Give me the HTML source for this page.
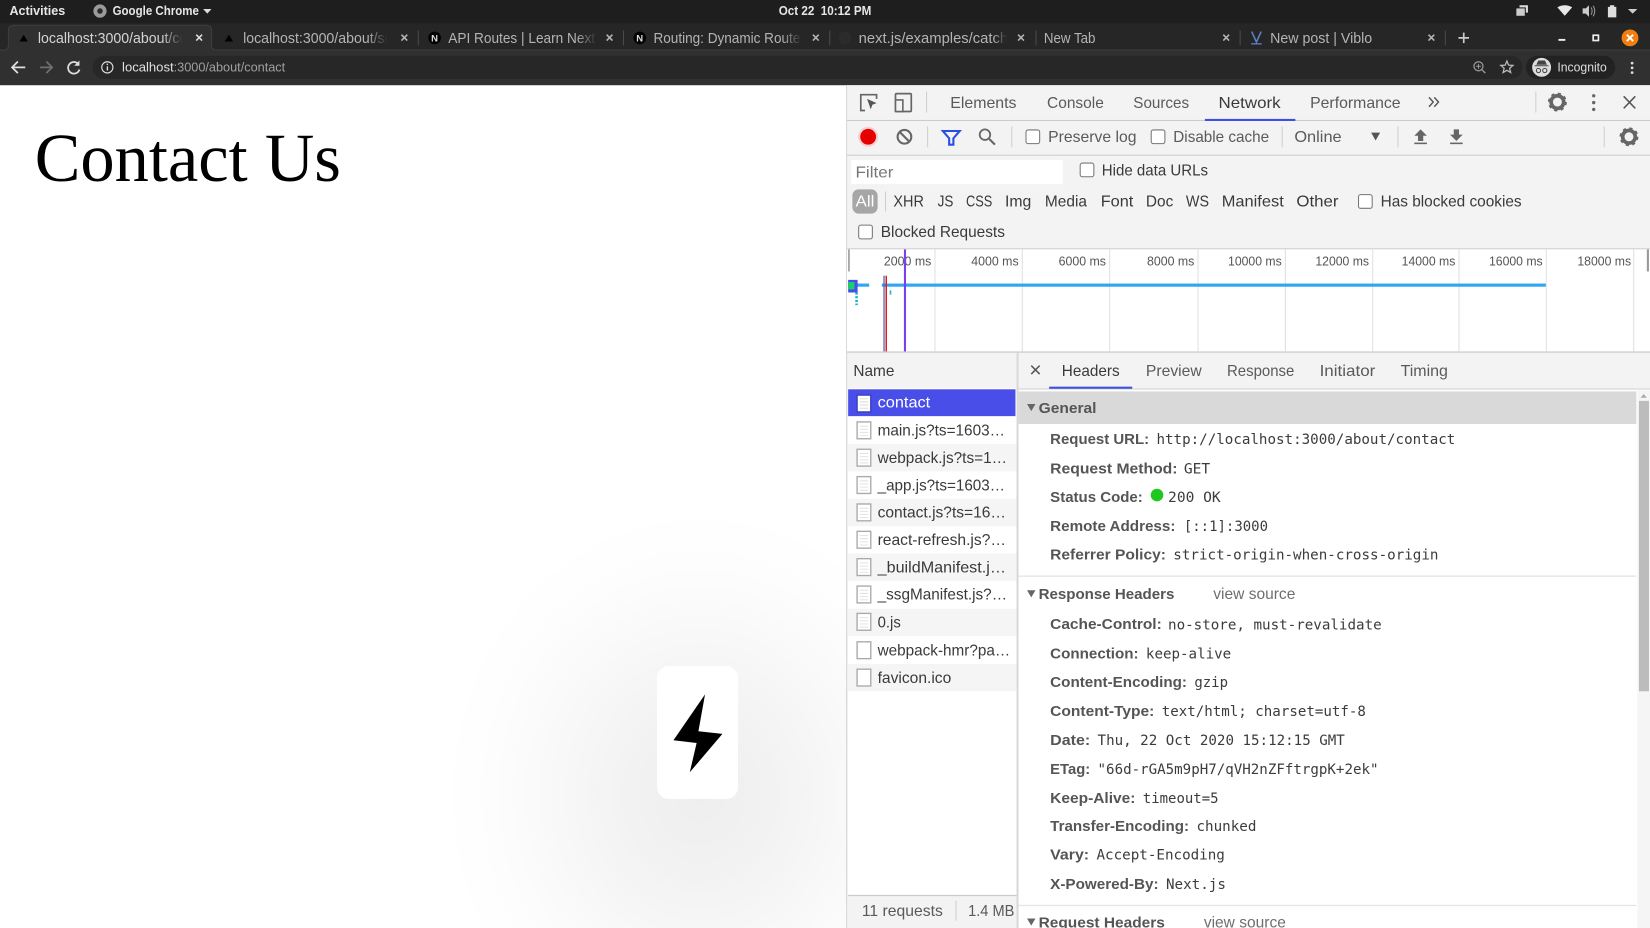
<!DOCTYPE html>
<html><head><meta charset="utf-8"><title>Contact Us</title>
<style>
html,body{margin:0;padding:0;background:#fff;width:1650px;height:928px;overflow:hidden}
#w{position:relative;width:1650px;height:928px;overflow:hidden}
svg{display:block;position:absolute;left:0;top:0;filter:blur(.3px)}
text{font-family:"Liberation Sans",sans-serif;font-size:14.6px;fill:#5a5a5a;white-space:pre}
.m{font-family:"DejaVu Sans Mono","Liberation Mono",monospace;font-size:13.4px;fill:#3c3c3c}
.b{font-weight:bold;font-size:14.4px;fill:#555}
.k{fill:#3a3a3a}
.t{fill:#b4b4b4;font-size:14.2px}
.o{fill:#e6e6e6;font-weight:bold;font-size:12.5px}
.tm{fill:#555;font-size:12.2px}
.ic{fill:none;stroke:#666;stroke-width:1.6}
.cb{fill:#fff;stroke:#767676;stroke-width:1}
.sep{fill:#cfcfcf}
.x{stroke:#b5b5b5;stroke-width:1.5;fill:none}
</style></head><body>
<div id="w">
<div style="position:absolute;left:440px;top:510px;width:520px;height:418px;background:radial-gradient(ellipse 260px 290px at 260px 285px,rgba(0,0,0,.065) 0%,rgba(0,0,0,.05) 28%,rgba(0,0,0,.026) 55%,rgba(0,0,0,.008) 80%,rgba(0,0,0,0) 100%)"></div>
<div style="position:absolute;left:657px;top:666px;width:81px;height:133px;border-radius:12px;background:#fff"></div>
<svg width="1650" height="928" viewBox="0 0 1568 882" preserveAspectRatio="none" xmlns="http://www.w3.org/2000/svg">
<defs>
<linearGradient id="fa" x1="0" x2="1" y1="0" y2="0"><stop offset="0" stop-color="#303030" stop-opacity="0"/><stop offset=".8" stop-color="#303030"/></linearGradient>
<linearGradient id="fb" x1="0" x2="1" y1="0" y2="0"><stop offset="0" stop-color="#262626" stop-opacity="0"/><stop offset=".8" stop-color="#262626"/></linearGradient>
</defs>
<!-- chrome -->
<rect x="0" y="0" width="1568" height="23" fill="#1e1e1e"/>
<rect x="0" y="22" width="1568" height="27" fill="#262626"/>
<rect x="0" y="49" width="1568" height="32" fill="#303030"/>
<path d="M0 47.5H4Q8 47.5 8 43V29Q8 24 13 24H196Q201 24 201 29V43Q201 47.5 206 47.5H1568V50H0Z" fill="#303030"/>
<path d="M0 47.5H4Q8 47.5 8 43V29Q8 24 13 24H196Q201 24 201 29V43Q201 47.5 206 47.5H1568" fill="none" stroke="#3e3e3e" stroke-width="1"/>
<text class="o" x="9" y="14.5" textLength="53" lengthAdjust="spacingAndGlyphs">Activities</text>
<circle cx="95" cy="10.5" r="6.3" fill="#9a9a9a"/><circle cx="95" cy="10.5" r="2.6" fill="#2a2a2a"/>
<text class="o" x="107" y="14.5" textLength="82" lengthAdjust="spacingAndGlyphs">Google Chrome</text>
<path d="M193 8.5h8l-4 4.5z" fill="#ddd"/>
<text class="o" x="740" y="14.5" textLength="88" lengthAdjust="spacingAndGlyphs">Oct 22  10:12 PM</text>
<path d="M1441 8h8v7h-8z" fill="#ccc"/><path d="M1444 5h8v7h-2V7h-6z" fill="#ddd"/>
<path d="M1480 7q7-4 14 0l-7 8z" fill="#e8e8e8"/>
<path d="M1504 8h3l3-3v11l-3-3h-3z" fill="#ccc"/><path d="M1512 7q2 3.500 0 7M1514 5.500q3 5 0 10" stroke="#999" stroke-width="1" fill="none"/>
<path d="M1528 6.500h2v-1.500h4v1.500h2v10h-8z" fill="#ddd"/>
<path d="M1547 8.500h9l-4.500 4.500z" fill="#ccc"/>
<!-- tabs -->
<path d="M18.500 39.500l4-6.500 4 6.500z" fill="#000"/>
<text class="t" x="36" y="41" style="fill:#d5d5d5" textLength="142" lengthAdjust="spacingAndGlyphs">localhost:3000/about/co</text>
<rect x="154" y="28" width="24" height="16" fill="url(#fa)"/>
<path class="x" d="M186.500 33l5.500 5.500M192 33l-5.500 5.500" style="stroke:#ddd"/>
<path d="M213.500 39.500l4-6.500 4 6.500z" fill="#000"/>
<text class="t" x="231" y="41" textLength="142" lengthAdjust="spacingAndGlyphs">localhost:3000/about/so</text>
<rect x="349" y="28" width="24" height="16" fill="url(#fb)"/>
<path class="x" d="M381.500 33l5.500 5.500M387 33l-5.500 5.500"/>
<rect x="397" y="29" width="1" height="14" fill="#4a4a4a"/>
<circle cx="413" cy="36" r="6" fill="#000"/><text x="409.700" y="39.500" style="font-size:9px;fill:#ddd;font-weight:bold">N</text>
<text class="t" x="426" y="41" textLength="146" lengthAdjust="spacingAndGlyphs">API Routes | Learn Next.j</text>
<rect x="548" y="28" width="24" height="16" fill="url(#fb)"/>
<path class="x" d="M576.500 33l5.500 5.500M582 33l-5.500 5.500"/>
<rect x="592" y="29" width="1" height="14" fill="#4a4a4a"/>
<circle cx="608" cy="36" r="6" fill="#000"/><text x="604.700" y="39.500" style="font-size:9px;fill:#ddd;font-weight:bold">N</text>
<text class="t" x="621" y="41" textLength="146" lengthAdjust="spacingAndGlyphs">Routing: Dynamic Routes</text>
<rect x="743" y="28" width="24" height="16" fill="url(#fb)"/>
<path class="x" d="M772.500 33l5.500 5.500M778 33l-5.500 5.500"/>
<rect x="788" y="29" width="1" height="14" fill="#4a4a4a"/>
<circle cx="803" cy="36" r="6" fill="#2b2b2b"/>
<text class="t" x="816" y="41" textLength="142" lengthAdjust="spacingAndGlyphs">next.js/examples/catch</text>
<rect x="944" y="28" width="16" height="16" fill="url(#fb)"/>
<path class="x" d="M967.500 33l5.500 5.500M973 33l-5.500 5.500"/>
<rect x="984" y="29" width="1" height="14" fill="#4a4a4a"/>
<text class="t" x="992" y="41" textLength="49" lengthAdjust="spacingAndGlyphs">New Tab</text>
<path class="x" d="M1162.500 33l5.500 5.500M1168 33l-5.500 5.500"/>
<rect x="1178" y="29" width="1" height="14" fill="#4a4a4a"/>
<path d="M1189.500 30l4.500 10 4.500-10" fill="none" stroke="#5c7fc4" stroke-width="1.500"/><rect x="1189" y="41" width="10" height="1.300" fill="#5c7fc4"/>
<text class="t" x="1207" y="41" textLength="97" lengthAdjust="spacingAndGlyphs">New post | Viblo</text>
<path class="x" d="M1357.500 33l5.500 5.500M1363 33l-5.500 5.500"/>
<rect x="1373" y="29" width="1" height="14" fill="#4a4a4a"/>
<path d="M1391 31v10M1386 36h10" stroke="#ccc" stroke-width="1.600"/>
<rect x="1481" y="37" width="6.500" height="1.800" fill="#eee"/>
<rect x="1514" y="33.500" width="5" height="5" fill="none" stroke="#eee" stroke-width="1.600"/>
<circle cx="1549" cy="36" r="8" fill="#f07e10"/><path d="M1546 33l6 6M1552 33l-6 6" stroke="#fff" stroke-width="1.800"/>
<!-- toolbar -->
<path d="M24 64H12M17 58.500L11.500 64L17 69.500" fill="none" stroke="#ddd" stroke-width="1.700"/>
<path d="M50 64H38M44 58.500L49.500 64L44 69.500" fill="none" stroke="#6f6f6f" stroke-width="1.700"/>
<path d="M74.500 61A5.500 5.500 0 1 0 75.500 66" fill="none" stroke="#ddd" stroke-width="1.700"/><path d="M75.500 57.500v5h-5z" fill="#ddd"/>
<rect x="88" y="53" width="1359" height="22" rx="11" fill="#272727"/>
<circle cx="102" cy="64" r="5.300" fill="none" stroke="#ddd" stroke-width="1.100"/><rect x="101.400" y="63" width="1.300" height="4" fill="#ddd"/><rect x="101.400" y="60.500" width="1.300" height="1.300" fill="#ddd"/>
<text x="116" y="68" style="font-size:12.5px;fill:#e0e0e0" textLength="49" lengthAdjust="spacingAndGlyphs">localhost</text>
<text x="165" y="68" style="font-size:12.5px;fill:#a0a0a0" textLength="106" lengthAdjust="spacingAndGlyphs">:3000/about/contact</text>
<circle cx="1405" cy="63" r="4.300" fill="none" stroke="#999" stroke-width="1.200"/><path d="M1408 66l3.500 3.500" stroke="#999" stroke-width="1.300"/><path d="M1405 60.700v4.600M1402.700 63h4.600" stroke="#999"/>
<path d="M1432 58l1.600 3.900 4.200.300-3.200 2.700 1 4.100-3.600-2.200-3.600 2.200 1-4.100-3.200-2.700 4.200-.300z" fill="none" stroke="#bbb" stroke-width="1.200"/>
<rect x="1450" y="53" width="85" height="22" rx="11" fill="#222"/>
<circle cx="1465" cy="64" r="9" fill="#ddd"/><path d="M1460 61.500l1.800-4h6.400l1.800 4zM1458.500 62h13v1h-13z" fill="#444"/><circle cx="1462" cy="67" r="2" fill="none" stroke="#444"/><circle cx="1468" cy="67" r="2" fill="none" stroke="#444"/>
<text x="1480" y="68" style="font-size:12.5px;fill:#ddd" textLength="47" lengthAdjust="spacingAndGlyphs">Incognito</text>
<circle cx="1551" cy="60" r="1.300" fill="#ddd"/><circle cx="1551" cy="64.500" r="1.300" fill="#ddd"/><circle cx="1551" cy="69" r="1.300" fill="#ddd"/>
<!-- page -->
<text x="33" y="172" style="font-family:'Liberation Serif',serif;font-size:65px;fill:#000" textLength="291" lengthAdjust="spacingAndGlyphs">Contact Us</text>
<path d="M670 660L640 703.500L662 706.200L655.500 734L686.500 697.500L663.700 695z" fill="#000"/>
<!-- devtools bg -->
<rect x="804" y="81" width="764" height="801" fill="#f3f3f3"/>
<rect x="804" y="81" width="1" height="801" fill="#d8d8d8"/>
<rect x="805" y="114" width="763" height="1" fill="#ccc"/>
<rect x="805" y="147" width="763" height="1" fill="#ccc"/>
<rect x="805" y="236" width="763" height="1" fill="#ccc"/>
<!-- row1 -->
<path class="ic" d="M822 105h-4v-15h15v4" /><path d="M824 94l9 4-4 1.500-1.500 4.500z" fill="#555"/>
<rect class="ic" x="851" y="89" width="15" height="17" rx="1"/><rect x="851" y="95" width="7" height="11" fill="#f3f3f3" stroke="#666" stroke-width="1.500"/>
<rect x="880" y="87" width="1" height="20" class="sep"/>
<text x="903" y="102.500" textLength="63" lengthAdjust="spacingAndGlyphs">Elements</text>
<text x="995" y="102.500" textLength="54" lengthAdjust="spacingAndGlyphs">Console</text>
<text x="1077" y="102.500" textLength="53" lengthAdjust="spacingAndGlyphs">Sources</text>
<text class="k" x="1158" y="102.500" textLength="59" lengthAdjust="spacingAndGlyphs">Network</text>
<text x="1245" y="102.500" textLength="86" lengthAdjust="spacingAndGlyphs">Performance</text>
<path d="M1358 92.500l4 4.500-4 4.500M1363 92.500l4 4.500-4 4.500" fill="none" stroke="#555" stroke-width="1.400"/>
<rect x="1145" y="113" width="86" height="2" fill="#3b4fe0"/>
<rect x="1459" y="87" width="1" height="20" class="sep"/>
<circle cx="1480" cy="97" r="6" fill="none" stroke="#666" stroke-width="3.500"/><circle cx="1480" cy="97" r="8" fill="none" stroke="#666" stroke-width="2" stroke-dasharray="3 3.300"/>
<circle cx="1514.500" cy="91" r="1.600" fill="#666"/><circle cx="1514.500" cy="97.500" r="1.600" fill="#666"/><circle cx="1514.500" cy="104" r="1.600" fill="#666"/>
<path d="M1543 91.500l11 11.500M1554 91.500l-11 11.500" stroke="#555" stroke-width="1.500"/>
<!-- row2 -->
<circle cx="825" cy="130" r="9.500" fill="#f4d0d0"/><circle cx="825" cy="130" r="7.500" fill="#e60000"/>
<circle cx="859.500" cy="130" r="6.500" fill="none" stroke="#666" stroke-width="2"/><path d="M855 125.500l9 9" stroke="#666" stroke-width="2"/>
<rect x="881" y="120" width="1" height="20" class="sep"/>
<path d="M896 124.500h16l-6 7v6l-4 0v-6z" fill="none" stroke="#2a4fe0" stroke-width="2"/>
<circle cx="936" cy="128" r="5" fill="none" stroke="#666" stroke-width="1.700"/><path d="M940 132l5.500 5.500" stroke="#666" stroke-width="2"/>
<rect x="961" y="120" width="1" height="20" class="sep"/>
<rect class="cb" x="975" y="123.500" width="13" height="13" rx="2"/>
<text x="996" y="135" textLength="84" lengthAdjust="spacingAndGlyphs">Preserve log</text>
<rect class="cb" x="1094" y="123.500" width="13" height="13" rx="2"/>
<text x="1115" y="135" textLength="91" lengthAdjust="spacingAndGlyphs">Disable cache</text>
<rect x="1218" y="120" width="1" height="20" class="sep"/>
<text x="1230" y="135" textLength="45" lengthAdjust="spacingAndGlyphs">Online</text>
<path d="M1303 126h8.500l-4.250 7.500z" fill="#555"/>
<rect x="1328" y="120" width="1" height="20" class="sep"/>
<path d="M1350 123l6 6h-3.500v5h-5v-5h-3.500z" fill="#666"/><rect x="1344" y="135.500" width="12" height="1.500" fill="#666"/>
<path d="M1384 134l6-6h-3.500v-5h-5v5h-3.500z" fill="#666"/><rect x="1378" y="135.500" width="12" height="1.500" fill="#666"/>
<rect x="1524" y="120" width="1" height="20" class="sep"/>
<circle cx="1548" cy="130" r="6" fill="none" stroke="#666" stroke-width="3.500"/><circle cx="1548" cy="130" r="8" fill="none" stroke="#666" stroke-width="2" stroke-dasharray="3 3.300"/>
<!-- row3 -->
<rect x="809" y="152" width="201" height="23" fill="#fff"/>
<text x="813" y="168.500" style="fill:#777" textLength="36" lengthAdjust="spacingAndGlyphs">Filter</text>
<rect class="cb" x="1026.500" y="155" width="13" height="13" rx="2"/>
<text class="k" x="1047" y="167" textLength="101" lengthAdjust="spacingAndGlyphs">Hide data URLs</text>
<!-- row4 -->
<rect x="810" y="180" width="24" height="23" rx="6" fill="#a6a6a6"/>
<text x="813" y="196.500" style="fill:#fff" textLength="18" lengthAdjust="spacingAndGlyphs">All</text>
<rect x="841" y="182" width="1" height="19" class="sep"/>
<text class="k" x="849" y="196.500" textLength="29" lengthAdjust="spacingAndGlyphs">XHR</text>
<text class="k" x="891" y="196.500" textLength="15" lengthAdjust="spacingAndGlyphs">JS</text>
<text class="k" x="918" y="196.500" textLength="25" lengthAdjust="spacingAndGlyphs">CSS</text>
<text class="k" x="955" y="196.500" textLength="25" lengthAdjust="spacingAndGlyphs">Img</text>
<text class="k" x="993" y="196.500" textLength="40" lengthAdjust="spacingAndGlyphs">Media</text>
<text class="k" x="1046" y="196.500" textLength="31" lengthAdjust="spacingAndGlyphs">Font</text>
<text class="k" x="1089" y="196.500" textLength="26" lengthAdjust="spacingAndGlyphs">Doc</text>
<text class="k" x="1127" y="196.500" textLength="22" lengthAdjust="spacingAndGlyphs">WS</text>
<text class="k" x="1161" y="196.500" textLength="59" lengthAdjust="spacingAndGlyphs">Manifest</text>
<text class="k" x="1232" y="196.500" textLength="40" lengthAdjust="spacingAndGlyphs">Other</text>
<rect class="cb" x="1291" y="185" width="13" height="13" rx="2"/>
<text class="k" x="1312" y="196.500" textLength="134" lengthAdjust="spacingAndGlyphs">Has blocked cookies</text>
<!-- row5 -->
<rect class="cb" x="816" y="214" width="13" height="13" rx="2"/>
<text class="k" x="837" y="225.500" textLength="118" lengthAdjust="spacingAndGlyphs">Blocked Requests</text>
<!-- timeline -->
<rect x="805" y="237" width="763" height="97" fill="#fff"/>
<rect x="805" y="334" width="763" height="1.200" fill="#ccc"/>
<g fill="#e0e0e0">
<rect x="888" y="237" width="1" height="97"/><rect x="971" y="237" width="1" height="97"/><rect x="1054" y="237" width="1" height="97"/><rect x="1138" y="237" width="1" height="97"/><rect x="1221" y="237" width="1" height="97"/><rect x="1304" y="237" width="1" height="97"/><rect x="1386" y="237" width="1" height="97"/><rect x="1469" y="237" width="1" height="97"/><rect x="1552" y="237" width="1" height="97"/>
</g>
<rect x="806" y="237" width="1.500" height="21" fill="#999"/><rect x="1565" y="237" width="2" height="21" fill="#999"/>
<text class="tm" x="840" y="252.500" textLength="45" lengthAdjust="spacingAndGlyphs">2000 ms</text>
<text class="tm" x="923" y="252.500" textLength="45" lengthAdjust="spacingAndGlyphs">4000 ms</text>
<text class="tm" x="1006" y="252.500" textLength="45" lengthAdjust="spacingAndGlyphs">6000 ms</text>
<text class="tm" x="1090" y="252.500" textLength="45" lengthAdjust="spacingAndGlyphs">8000 ms</text>
<text class="tm" x="1167" y="252.500" textLength="51" lengthAdjust="spacingAndGlyphs">10000 ms</text>
<text class="tm" x="1250" y="252.500" textLength="51" lengthAdjust="spacingAndGlyphs">12000 ms</text>
<text class="tm" x="1332" y="252.500" textLength="51" lengthAdjust="spacingAndGlyphs">14000 ms</text>
<text class="tm" x="1415" y="252.500" textLength="51" lengthAdjust="spacingAndGlyphs">16000 ms</text>
<text class="tm" x="1499" y="252.500" textLength="51" lengthAdjust="spacingAndGlyphs">18000 ms</text>
<rect x="806" y="269.500" width="20" height="3" fill="#2fa6f2"/>
<rect x="838" y="269.500" width="631" height="3" fill="#2fa6f2"/>
<rect x="806" y="266" width="9" height="12" fill="#4a4ee8"/><rect x="806" y="268" width="6" height="7" fill="#18cf6a"/>
<path d="M814 278v12" stroke="#18b5d0" stroke-width="2.500" stroke-dasharray="2 1.500"/>
<rect x="845.500" y="276" width="1.500" height="4" fill="#18b5d0"/>
<rect x="839.500" y="262" width="1.200" height="72" fill="#5a5ea8"/>
<rect x="841.500" y="262" width="1.400" height="72" fill="#e01818"/>
<rect x="859" y="237" width="2" height="97" fill="#7a3ff0"/>
<!-- name col -->
<rect x="806" y="336" width="160" height="34" fill="#f3f3f3"/>
<text class="k" x="811" y="357.500" textLength="39" lengthAdjust="spacingAndGlyphs">Name</text>
<rect x="806" y="369" width="160" height="482" fill="#fff"/>
<rect x="966" y="335" width="2" height="547" fill="#d8d8d8"/>
<g fill="#f5f5f5">
<rect x="806" y="422" width="160" height="26"/><rect x="806" y="474" width="160" height="26"/><rect x="806" y="526" width="160" height="26"/><rect x="806" y="578.500" width="160" height="26"/><rect x="806" y="631" width="160" height="26"/>
</g>
<rect x="806" y="370" width="159" height="25.500" fill="#4a4ee8"/>
<g fill="#fff" stroke="#aaa" stroke-width="1.300">
<rect x="814.500" y="375.500" width="13" height="16" style="stroke:#3b3fc0"/>
<rect x="814.500" y="401" width="13" height="16"/><rect x="814.500" y="427" width="13" height="16"/><rect x="814.500" y="453" width="13" height="16"/><rect x="814.500" y="479" width="13" height="16"/><rect x="814.500" y="505" width="13" height="16"/><rect x="814.500" y="531" width="13" height="16"/><rect x="814.500" y="557" width="13" height="16"/><rect x="814.500" y="583" width="13" height="16"/><rect x="814.500" y="610" width="13" height="16"/><rect x="814.500" y="636" width="13" height="16"/>
</g>
<path d="M817 379h8M817 382h8M817 385h8M817 388h8" stroke="#ddd" stroke-width="1"/>
<path d="M817 405h8M817 408h8M817 411h8M817 414h8M817 431h8M817 434h8M817 437h8M817 440h8M817 457h8M817 460h8M817 463h8M817 466h8M817 483h8M817 486h8M817 489h8M817 492h8M817 509h8M817 512h8M817 515h8M817 518h8M817 535h8M817 538h8M817 541h8M817 544h8M817 561h8M817 564h8M817 567h8M817 570h8M817 587h8M817 590h8M817 593h8M817 596h8" stroke="#e4e4e4" stroke-width="1"/>
<text x="834" y="387.500" style="fill:#fff" textLength="50" lengthAdjust="spacingAndGlyphs">contact</text>
<text class="k" x="834" y="414" textLength="121" lengthAdjust="spacingAndGlyphs">main.js?ts=1603…</text>
<text class="k" x="834" y="440" textLength="123" lengthAdjust="spacingAndGlyphs">webpack.js?ts=1…</text>
<text class="k" x="834" y="466" textLength="121" lengthAdjust="spacingAndGlyphs">_app.js?ts=1603…</text>
<text class="k" x="834" y="492" textLength="122" lengthAdjust="spacingAndGlyphs">contact.js?ts=16…</text>
<text class="k" x="834" y="518" textLength="122" lengthAdjust="spacingAndGlyphs">react-refresh.js?…</text>
<text class="k" x="834" y="544" textLength="122" lengthAdjust="spacingAndGlyphs">_buildManifest.j…</text>
<text class="k" x="834" y="570" textLength="123" lengthAdjust="spacingAndGlyphs">_ssgManifest.js?…</text>
<text class="k" x="834" y="596.500" textLength="22" lengthAdjust="spacingAndGlyphs">0.js</text>
<text class="k" x="834" y="623" textLength="126" lengthAdjust="spacingAndGlyphs">webpack-hmr?pa…</text>
<text class="k" x="834" y="649" textLength="70" lengthAdjust="spacingAndGlyphs">favicon.ico</text>
<rect x="806" y="851" width="160" height="31" fill="#f3f3f3"/><rect x="806" y="850.500" width="160" height="1.200" fill="#ccc"/>
<text x="819" y="870.500" textLength="77" lengthAdjust="spacingAndGlyphs">11 requests</text>
<rect x="908" y="856" width="1" height="19" class="sep"/>
<text x="920" y="870.500" textLength="44" lengthAdjust="spacingAndGlyphs">1.4 MB</text>
<!-- details -->
<rect x="968" y="336" width="600" height="33" fill="#f3f3f3"/>
<rect x="968" y="369" width="600" height="1.500" fill="#ddd"/>
<path d="M980 347.500l8 8M988 347.500l-8 8" stroke="#555" stroke-width="1.500"/>
<text class="k" x="1009" y="357.500" textLength="55" lengthAdjust="spacingAndGlyphs">Headers</text>
<text x="1089" y="357.500" textLength="53" lengthAdjust="spacingAndGlyphs">Preview</text>
<text x="1166" y="357.500" textLength="64" lengthAdjust="spacingAndGlyphs">Response</text>
<text x="1254" y="357.500" textLength="53" lengthAdjust="spacingAndGlyphs">Initiator</text>
<text x="1331" y="357.500" textLength="45" lengthAdjust="spacingAndGlyphs">Timing</text>
<rect x="997" y="367.500" width="79" height="2" fill="#3b4fe0"/>
<rect x="968" y="370.500" width="600" height="511.500" fill="#fff"/>
<rect x="968" y="372" width="587" height="31" fill="#d9d9d9"/>
<path d="M976 384h8l-4 6.800z" fill="#666"/>
<text class="b" x="987" y="392.500" textLength="55" lengthAdjust="spacingAndGlyphs">General</text>
<text class="b" x="998" y="422" textLength="94" lengthAdjust="spacingAndGlyphs">Request URL:</text><text class="m" x="1099" y="422" textLength="284" lengthAdjust="spacingAndGlyphs">http://localhost:3000/about/contact</text>
<text class="b" x="998" y="450" textLength="121" lengthAdjust="spacingAndGlyphs">Request Method:</text><text class="m" x="1125" y="450" textLength="25" lengthAdjust="spacingAndGlyphs">GET</text>
<text class="b" x="998" y="477" textLength="88" lengthAdjust="spacingAndGlyphs">Status Code:</text><circle cx="1099.500" cy="470.500" r="6" fill="#1ec81e"/><text class="m" x="1110" y="477" textLength="50" lengthAdjust="spacingAndGlyphs">200 OK</text>
<text class="b" x="998" y="504.500" textLength="119" lengthAdjust="spacingAndGlyphs">Remote Address:</text><text class="m" x="1125" y="504.500" textLength="80" lengthAdjust="spacingAndGlyphs">[::1]:3000</text>
<text class="b" x="998" y="532" textLength="110" lengthAdjust="spacingAndGlyphs">Referrer Policy:</text><text class="m" x="1115" y="532" textLength="252" lengthAdjust="spacingAndGlyphs">strict-origin-when-cross-origin</text>
<rect x="968" y="547" width="587" height="1.200" fill="#e3e3e3"/>
<path d="M976 561h8l-4 6.800z" fill="#666"/>
<text class="b" x="987" y="569.500" textLength="129" lengthAdjust="spacingAndGlyphs">Response Headers</text>
<text x="1153" y="569.500" style="fill:#6e6e6e" textLength="78" lengthAdjust="spacingAndGlyphs">view source</text>
<text class="b" x="998" y="598" textLength="106" lengthAdjust="spacingAndGlyphs">Cache-Control:</text><text class="m" x="1110" y="598.500" textLength="203" lengthAdjust="spacingAndGlyphs">no-store, must-revalidate</text>
<text class="b" x="998" y="626" textLength="84" lengthAdjust="spacingAndGlyphs">Connection:</text><text class="m" x="1089" y="626" textLength="81" lengthAdjust="spacingAndGlyphs">keep-alive</text>
<text class="b" x="998" y="653" textLength="130" lengthAdjust="spacingAndGlyphs">Content-Encoding:</text><text class="m" x="1135" y="653" textLength="32" lengthAdjust="spacingAndGlyphs">gzip</text>
<text class="b" x="998" y="680.500" textLength="99" lengthAdjust="spacingAndGlyphs">Content-Type:</text><text class="m" x="1104" y="680.500" textLength="194" lengthAdjust="spacingAndGlyphs">text/html; charset=utf-8</text>
<text class="b" x="998" y="708" textLength="38" lengthAdjust="spacingAndGlyphs">Date:</text><text class="m" x="1043" y="708" textLength="235" lengthAdjust="spacingAndGlyphs">Thu, 22 Oct 2020 15:12:15 GMT</text>
<text class="b" x="998" y="735.500" textLength="38" lengthAdjust="spacingAndGlyphs">ETag:</text><text class="m" x="1043" y="735.500" textLength="267" lengthAdjust="spacingAndGlyphs">"66d-rGA5m9pH7/qVH2nZFftrgpK+2ek"</text>
<text class="b" x="998" y="763" textLength="81" lengthAdjust="spacingAndGlyphs">Keep-Alive:</text><text class="m" x="1086" y="763" textLength="72" lengthAdjust="spacingAndGlyphs">timeout=5</text>
<text class="b" x="998" y="790" textLength="132" lengthAdjust="spacingAndGlyphs">Transfer-Encoding:</text><text class="m" x="1137" y="790" textLength="57" lengthAdjust="spacingAndGlyphs">chunked</text>
<text class="b" x="998" y="817" textLength="37" lengthAdjust="spacingAndGlyphs">Vary:</text><text class="m" x="1042" y="817" textLength="122" lengthAdjust="spacingAndGlyphs">Accept-Encoding</text>
<text class="b" x="998" y="845" textLength="103" lengthAdjust="spacingAndGlyphs">X-Powered-By:</text><text class="m" x="1108" y="845" textLength="57" lengthAdjust="spacingAndGlyphs">Next.js</text>
<rect x="968" y="860" width="587" height="1.200" fill="#e3e3e3"/>
<path d="M976 873h8l-4 6.800z" fill="#666"/>
<text class="b" x="987" y="881.500" textLength="120" lengthAdjust="spacingAndGlyphs">Request Headers</text>
<text x="1144" y="881.500" style="fill:#6e6e6e" textLength="78" lengthAdjust="spacingAndGlyphs">view source</text>
<!-- scrollbar -->
<rect x="1556" y="371" width="12" height="511" fill="#f5f5f5"/>
<path d="M1559 378l3-3.500 3 3.500z" fill="#aaa"/>
<rect x="1557.500" y="381" width="9.500" height="276" fill="#bcbcbc"/>
</svg>
</div>
</body></html>
